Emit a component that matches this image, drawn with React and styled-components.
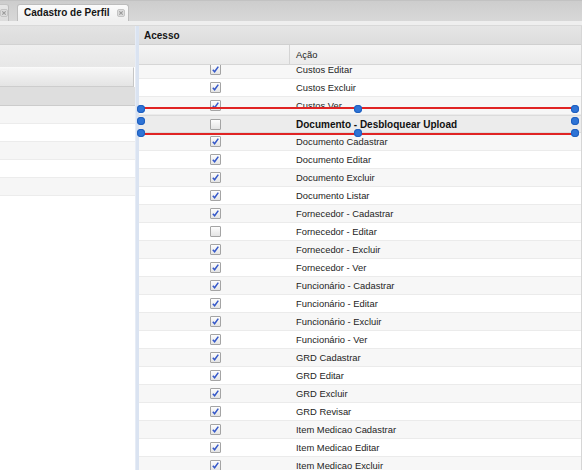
import React, { useEffect, useRef } from 'react';
import styled, { createGlobalStyle } from 'styled-components';

const GlobalStyle = createGlobalStyle`
  html, body {
    margin: 0;
    padding: 0;
    background: #ffffff;
  }
  body {
    font-family: 'Liberation Sans', Arial, sans-serif;
    color: #1e1e1e;
  }
`;

const Frame = styled.div`
  width: 582px;
  height: 470px;
  display: flex;
  flex-direction: column;
  overflow: hidden;
  background: #ffffff;
`;

const TabBar = styled.div`
  height: 21px;
  flex: none;
  box-sizing: border-box;
  display: flex;
  align-items: flex-end;
  gap: 8px;
  background: linear-gradient(#cdcdcd, #d8d8d8);
  border-top: 1px solid #c2c2c2;
`;

const PrevTab = styled.div`
  width: 9px;
  height: 17px;
  box-sizing: border-box;
  display: flex;
  align-items: center;
  justify-content: center;
  background: linear-gradient(#e6e6e6, #dcdcdc);
  border-right: 1px solid #bcbcbc;
  border-top: 1px solid #c4c4c4;
  border-top-right-radius: 3px;
`;

const Tab = styled.div`
  height: 17px;
  box-sizing: border-box;
  display: flex;
  align-items: center;
  gap: 7px;
  padding: 0 3px 0 6px;
  background: linear-gradient(#fbfbfb, #efefef);
  border: 1px solid #bdbdbd;
  border-bottom: none;
  border-radius: 3px 3px 0 0;
`;

const TabLabel = styled.span`
  font-size: 10px;
  font-weight: bold;
  color: #151515;
  line-height: 1;
`;

const TabStrip = styled.div`
  height: 5px;
  flex: none;
  background: #efefef;
  border-bottom: 1px solid #d9d9d9;
  box-sizing: border-box;
`;

const Content = styled.div`
  flex: 1;
  min-height: 0;
  display: flex;
`;

const LeftPanel = styled.div`
  width: 135px;
  flex: none;
  display: flex;
  flex-direction: column;
  background: #ffffff;
`;

const LeftHeader = styled.div`
  height: 19px;
  flex: none;
  box-sizing: border-box;
  background: linear-gradient(#e3e3e3, #dcdcdc);
  border-bottom: 1px solid #d2d2d2;
`;

const LeftToolbar = styled.div`
  height: 22px;
  flex: none;
  background: linear-gradient(#efefef, #e7e7e7);
`;

const FilterButton = styled.div`
  height: 20px;
  flex: none;
  box-sizing: border-box;
  margin-right: 1px;
  background: linear-gradient(#f7f7f7, #e4e4e4);
  border-top: 1px solid #fafafa;
  border-bottom: 1px solid #cdcdcd;
  border-right: 1px solid #c6c6c6;
`;

const GroupHeader = styled.div`
  height: 19px;
  flex: none;
  box-sizing: border-box;
  background: #dedede;
  border-bottom: 1px solid #cccccc;
`;

const LeftRow = styled.div`
  height: 18px;
  flex: none;
  box-sizing: border-box;
  background: ${(p) => (p.$alt ? '#f6f6f6' : '#ffffff')};
  border-bottom: 1px solid #ececec;
`;

const Splitter = styled.div`
  width: 4px;
  flex: none;
  background: #dae3f1;
  border-left: 1px solid #e6ecf6;
  box-sizing: border-box;
`;

const RightPanel = styled.div`
  flex: 1;
  min-width: 0;
  display: flex;
  flex-direction: column;
  border-right: 1px solid #d6d6d6;
`;

const PanelTitle = styled.div`
  height: 19px;
  flex: none;
  box-sizing: border-box;
  display: flex;
  align-items: center;
  padding-left: 5px;
  font-size: 10px;
  font-weight: bold;
  color: #151515;
  background: linear-gradient(#e6e6e6, #dddddd);
  border-bottom: 1px solid #d0d0d0;
`;

const GridHeader = styled.div`
  height: 20px;
  flex: none;
  box-sizing: border-box;
  display: grid;
  grid-template-columns: 151px 1fr;
  background: linear-gradient(#f4f4f4, #ebebeb);
  border-bottom: 1px solid #d6d6d6;
`;

const HeaderCell = styled.div`
  display: flex;
  align-items: center;
  padding-left: 6px;
  font-size: 9.4px;
  color: #222222;
  border-right: ${(p) => (p.$divider ? '1px solid #d4d4d4' : 'none')};
`;

const BodyWrap = styled.div`
  flex: 1;
  min-height: 0;
  position: relative;
`;

const GridBody = styled.div`
  height: 100%;
  overflow: hidden;
`;

const Row = styled.div`
  height: 18px;
  box-sizing: border-box;
  display: grid;
  grid-template-columns: 151px 1fr;
  align-items: center;
  background: ${(p) => (p.$selected ? '#ececec' : p.$alt ? '#f7f7f7' : '#ffffff')};
  border-bottom: 1px solid ${(p) => (p.$selected ? '#dcdcdc' : '#ebebeb')};
  border-top: ${(p) => (p.$selected ? '1px solid #dcdcdc' : 'none')};
`;

const CheckCell = styled.div`
  display: flex;
  justify-content: center;
  padding-left: 1px;
`;

const Box = styled.span`
  width: 11px;
  height: 11px;
  box-sizing: border-box;
  display: flex;
  align-items: center;
  justify-content: center;
  border: 1px solid #a4a4a4;
  border-radius: 1px;
  background: linear-gradient(#fdfdfd, #e4e4e4);
`;

const Label = styled.div`
  padding-left: 6px;
  font-size: ${(p) => (p.$bold ? '10px' : '9.4px')};
  font-weight: ${(p) => (p.$bold ? 'bold' : 'normal')};
  color: ${(p) => (p.$bold ? '#111111' : '#242424')};
  white-space: nowrap;
`;

const Selection = styled.div`
  position: absolute;
  top: 42px;
  left: 0;
  right: 4px;
  height: 28px;
  box-sizing: border-box;
  border-top: 2px solid #e02424;
  border-bottom: 2px solid #e02424;
  border-left: 2px dashed #e02424;
  border-right: 2px dashed #e02424;
  pointer-events: none;
`;

const Handle = styled.span`
  position: absolute;
  width: 8px;
  height: 8px;
  border-radius: 50%;
  background: #2f74d6;
  box-shadow: 0 0 0 1px #1f5fbf inset;
  left: ${(p) => p.$x};
  top: ${(p) => p.$y};
  transform: translate(-50%, -50%);
`;

const CloseIcon = () => (
  <svg width="8" height="8" viewBox="0 0 8 8">
    <rect x="0.5" y="0.5" width="7" height="7" rx="1.5" fill="#dcdcdc" stroke="#c4c4c4" />
    <path d="M2.3 2.3 L5.7 5.7 M5.7 2.3 L2.3 5.7" stroke="#9a9a9a" strokeWidth="1.1" />
  </svg>
);

const Checkbox = ({ checked }) => (
  <Box>
    {checked && (
      <svg width="9" height="9" viewBox="0 0 9 9">
        <path d="M1.8 4.8 L3.6 6.8 L7.3 1.6" fill="none" stroke="#3558c9" strokeWidth="1.5" />
      </svg>
    )}
  </Box>
);

const permissions = [
  ['Custos Editar', true],
  ['Custos Excluir', true],
  ['Custos Ver', true],
  ['Documento - Desbloquear Upload', false, true],
  ['Documento Cadastrar', true],
  ['Documento Editar', true],
  ['Documento Excluir', true],
  ['Documento Listar', true],
  ['Fornecedor - Cadastrar', true],
  ['Fornecedor - Editar', false],
  ['Fornecedor - Excluir', true],
  ['Fornecedor - Ver', true],
  ['Funcionário - Cadastrar', true],
  ['Funcionário - Editar', true],
  ['Funcionário - Excluir', true],
  ['Funcionário - Ver', true],
  ['GRD Cadastrar', true],
  ['GRD Editar', true],
  ['GRD Excluir', true],
  ['GRD Revisar', true],
  ['Item Medicao Cadastrar', true],
  ['Item Medicao Editar', true],
  ['Item Medicao Excluir', true],
  ['Item Medicao Ver', true],
];

const handles = [
  ['0%', '0%'],
  ['50%', '0%'],
  ['100%', '0%'],
  ['0%', '50%'],
  ['100%', '50%'],
  ['0%', '100%'],
  ['50%', '100%'],
  ['100%', '100%'],
];

export default function App() {
  const bodyRef = useRef(null);

  useEffect(() => {
    // grid aparece rolado alguns pixels
    if (bodyRef.current) bodyRef.current.scrollTop = 4;
  }, []);

  return (
    <Frame>
      <GlobalStyle />
      <TabBar>
        <PrevTab>
          <CloseIcon />
        </PrevTab>
        <Tab>
          <TabLabel>Cadastro de Perfil</TabLabel>
          <CloseIcon />
        </Tab>
      </TabBar>
      <TabStrip />
      <Content>
        <LeftPanel>
          <LeftHeader />
          <LeftToolbar />
          <FilterButton />
          <GroupHeader />
          {[0, 1, 2, 3, 4].map((i) => (
            <LeftRow key={i} $alt={i % 2 === 0} />
          ))}
        </LeftPanel>
        <Splitter />
        <RightPanel>
          <PanelTitle>Acesso</PanelTitle>
          <GridHeader>
            <HeaderCell $divider />
            <HeaderCell>Ação</HeaderCell>
          </GridHeader>
          <BodyWrap>
            <GridBody ref={bodyRef}>
              {permissions.map(([name, checked, selected], i) => (
                <Row key={name} $alt={i % 2 === 0} $selected={selected}>
                  <CheckCell>
                    <Checkbox checked={checked} />
                  </CheckCell>
                  <Label $bold={selected}>{name}</Label>
                </Row>
              ))}
            </GridBody>
            <Selection>
              {handles.map(([x, y]) => (
                <Handle key={x + y} $x={x} $y={y} />
              ))}
            </Selection>
          </BodyWrap>
        </RightPanel>
      </Content>
    </Frame>
  );
}
